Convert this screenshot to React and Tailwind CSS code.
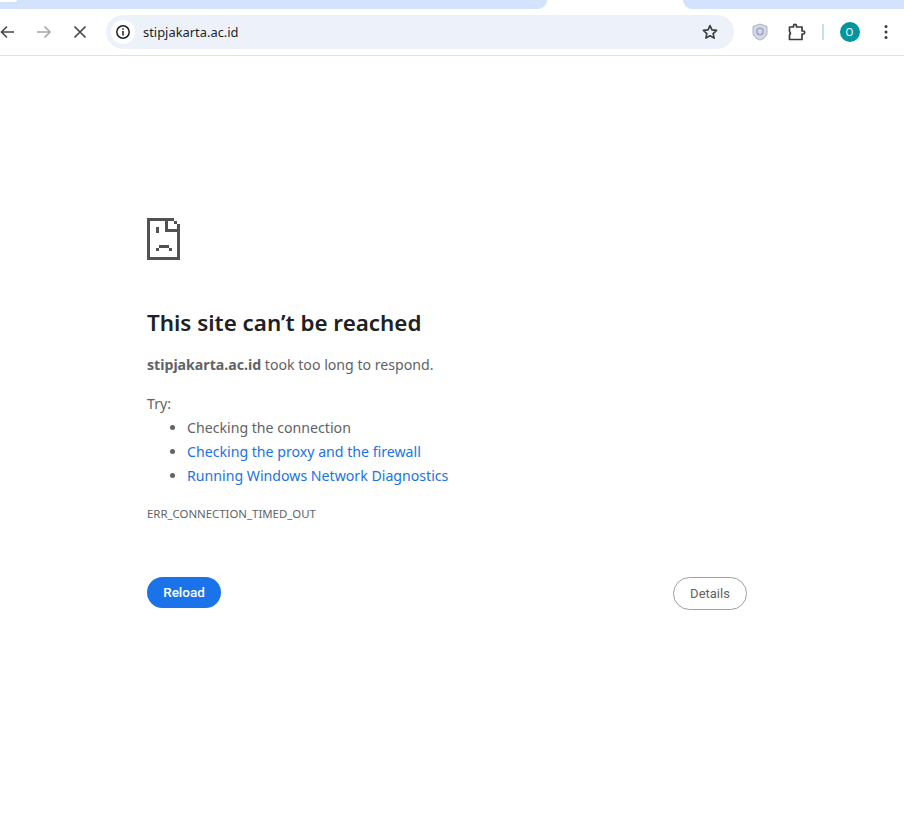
import React from "react";

const font = "font-['Noto_Sans','Open_Sans',sans-serif]";

const SadFile = () => (
  <svg className="block" width="33" height="42" viewBox="0 0 33 42" fill="#525252" shapeRendering="crispEdges">
    <path d="M0 0H27V3H30V6H33V42H0V0ZM3 3V39H30V14H18V3H3ZM21 3V11H30V6H27V3H21Z" fillRule="evenodd" />
    <rect x="9" y="9" width="3" height="6" />
    <rect x="12" y="27" width="10" height="3" />
    <rect x="9" y="30" width="3" height="3" />
    <rect x="22" y="30" width="3" height="3" />
  </svg>
);

const Toolbar = () => (
  <div className="flex h-[47px] items-center border-b border-[#dfe1e5] bg-white">
    <div className="flex w-[106px] shrink-0 items-center">
      <svg className="ml-[-2px]" width="18" height="18" viewBox="0 0 18 18" fill="none" stroke="#474747" strokeWidth="1.6">
        <path d="M16 9H3.500M9 3.500L3.500 9l5.500 5.500" />
      </svg>
      <svg className="ml-[19px]" width="18" height="18" viewBox="0 0 18 18" fill="none" stroke="#a8a8a8" strokeWidth="1.6">
        <path d="M2 9h13M9.500 3.500L15 9l-5.500 5.500" />
      </svg>
      <svg className="ml-[18px]" width="18" height="18" viewBox="0 0 18 18" fill="none" stroke="#474747" strokeWidth="1.7">
        <path d="M3.500 3.500l11 11M14.500 3.500l-11 11" />
      </svg>
    </div>
    <div className="flex h-[34px] w-[628px] shrink-0 items-center rounded-full bg-[#edf2fa] pl-[5px] pr-[15px]">
      <div className="flex h-6 w-6 items-center justify-center rounded-full bg-white">
        <svg width="16" height="16" viewBox="0 0 16 16" fill="none" stroke="#1f1f1f" strokeWidth="1.500">
          <circle cx="8" cy="8" r="6.200" />
          <path d="M8 7v4.500M8 4.300v1.500" />
        </svg>
      </div>
      <span className={`ml-[8px] flex-1 pt-[1px] text-[12.900px] text-[#1f1f1f] ${font}`}>stipjakarta.ac.id</span>
      <svg width="18" height="18" viewBox="0 0 24 24" fill="none" stroke="#3c3c3c" strokeWidth="2.200" strokeLinejoin="round">
        <path d="M12 3.500l2.600 5.700 6.200.7-4.600 4.200 1.300 6.100L12 17.100l-5.500 3.100 1.300-6.100-4.600-4.200 6.200-.7z" />
      </svg>
    </div>
    <svg className="ml-[18px]" width="16" height="18" viewBox="0 0 16 18">
      <path d="M8 1l7 2.500v6c0 4-3 6.500-7 7.500-4-1-7-3.500-7-7.500v-6z" fill="#d5d9e6" stroke="#aab0c6" />
      <circle cx="8" cy="8.500" r="3.200" fill="none" stroke="#a3aac0" strokeWidth="1.600" />
    </svg>
    <svg className="ml-[19px]" width="19" height="19" viewBox="0 0 19 19" fill="none" stroke="#3c3c3c" strokeWidth="1.700" strokeLinejoin="round">
      <path d="M2.500 4h4V2.800a1.500 1.500 0 0 1 3 0V4H15v4h1.200a1.500 1.500 0 0 1 0 3H15v5.500H2.500v-4.500a2.500 2.500 0 0 0 0-3.500V4z" />
    </svg>
    <div className="ml-[16px] h-[16px] w-[1.500px] bg-[#c9dcf8]" />
    <div className={`ml-[16px] flex h-5 w-5 items-center justify-center rounded-full bg-[#00959f] text-[10px] text-white ${font}`}>O</div>
    <svg className="ml-[18px]" width="16" height="16" viewBox="0 0 16 16" fill="#3c3c3c">
      <circle cx="8" cy="2.500" r="1.500" />
      <circle cx="8" cy="8" r="1.500" />
      <circle cx="8" cy="13.500" r="1.500" />
    </svg>
  </div>
);

export default function App() {
  return (
    <div className={`min-h-[822px] overflow-hidden bg-white ${font}`}>
      {/* Tab strip */}
      <div className="flex h-[9px] bg-white">
        <div className="relative w-[547px] rounded-br-[14px] bg-[#d3e3fd]">
          <div className="absolute left-0 top-0 h-[2px] w-[17px] rounded-br-[3px] bg-white" />
        </div>
        <div className="ml-[136px] flex-1 rounded-bl-[14px] bg-[#d3e3fd]" />
      </div>
      <Toolbar />

      {/* Error page */}
      <main className="ml-[147px] w-[600px] pt-[162px]">
        <SadFile />
        <h1 className="mt-[46px] text-[22.400px] font-semibold leading-[34px] text-[#202124]">This site can’t be reached</h1>
        <p className="mt-[15px] text-[14.150px] leading-[20px] text-[#5f6368]">
          <b className="font-bold">stipjakarta.ac.id</b> took too long to respond.
        </p>
        <p className="mt-[19px] text-[14.150px] leading-[20px] text-[#5f6368]">Try:</p>
        <ul className="ml-[40px] mt-[2px] list-disc text-[14.150px] leading-[24px] text-[#5f6368]">
          <li>Checking the connection</li>
          <li className="text-[#1a73e8] marker:text-[#5f6368]">Checking the proxy and the firewall</li>
          <li className="text-[#1a73e8] marker:text-[#5f6368]">Running Windows Network Diagnostics</li>
        </ul>
        <p className="mt-[18px] text-[11.400px] leading-[16px] text-[#5f6368]">ERR_CONNECTION_TIMED_OUT</p>
        <div className="mt-[55px] flex items-start justify-between">
          <button className="h-[31px] w-[74px] rounded-full bg-[#1a73e8] font-['Roboto',sans-serif] text-[13.500px] font-medium text-white">Reload</button>
          <button className="h-[33px] w-[74px] rounded-full border border-[#9aa0a6] bg-white font-['Roboto',sans-serif] text-[13px] text-[#5f6368]">Details</button>
        </div>
      </main>
    </div>
  );
}
